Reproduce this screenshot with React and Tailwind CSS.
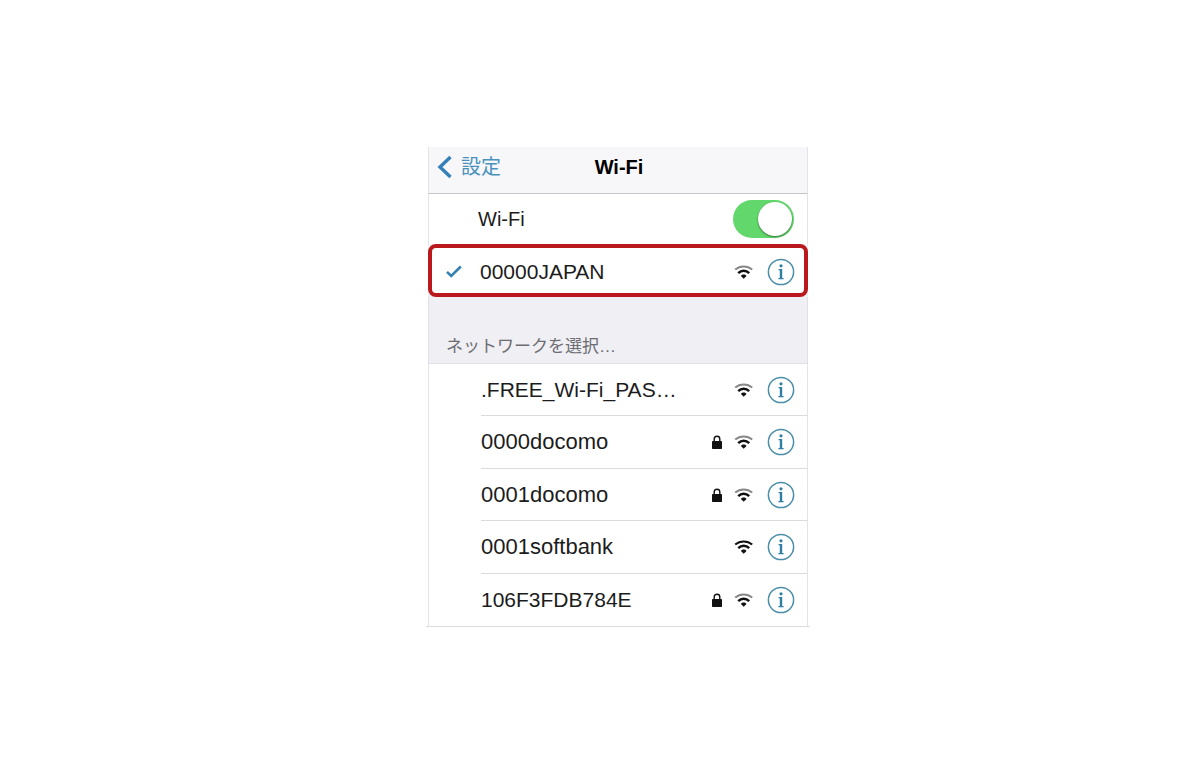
import { useState } from 'react';

const networks = [
  { name: '.FREE_Wi-Fi_PAS…', size: 'text-[21px]', locked: false, strong: false },
  { name: '0000docomo', size: 'text-[22px]', locked: true, strong: false },
  { name: '0001docomo', size: 'text-[22px]', locked: true, strong: false },
  { name: '0001softbank', size: 'text-[22px]', locked: false, strong: true },
  { name: '106F3FDB784E', size: 'text-[21px]', locked: true, strong: false },
];

function WifiIcon({ strong }) {
  return (
    <svg width="20" height="14" viewBox="0 0 20 14" fill="none" aria-hidden="true">
      <path d="M1.2 4.6C6 .4 13.4 .4 18.2 4.6" stroke={strong ? '#111' : '#888'} strokeWidth="2" />
      <path d="M4.2 8.2c3.2-3.2 7.8-3.2 11 0" stroke="#111" strokeWidth="2.4" />
      <path d="M9.7 13.8 6.9 11c1.4-1.9 4.2-1.9 5.6 0z" fill="#111" />
    </svg>
  );
}

function LockIcon() {
  return (
    <svg width="10" height="14" viewBox="0 0 10 14" aria-hidden="true">
      <path d="M2.2 7V4a2.8 2.8 0 0 1 5.6 0v3" fill="none" stroke="#111" strokeWidth="1.4" />
      <rect y="6" width="10" height="8" rx=".7" fill="#111" />
    </svg>
  );
}

function InfoButton({ name }) {
  return (
    <button type="button" aria-label={`${name} info`} className="shrink-0">
      <svg width="28" height="28" viewBox="0 0 28 28" fill="none" aria-hidden="true">
        <circle cx="14" cy="14" r="12.6" stroke="#4a8ea8" strokeWidth="1.5" />
        <circle cx="14" cy="7.8" r="1.6" fill="#2f7fa3" />
        <path d="M11.6 11.6H14M11.4 20.6h5.2" stroke="#2f7fa3" strokeWidth="1.2" />
        <path d="M14 11v9.8" stroke="#2f7fa3" strokeWidth="2.4" />
      </svg>
    </button>
  );
}

function Signal({ name, locked, strong }) {
  return (
    <div className="ml-auto flex items-center">
      {locked && <LockIcon />}
      <span className="ml-3 mr-[13px]">
        <WifiIcon strong={strong} />
      </span>
      <InfoButton name={name} />
    </div>
  );
}

export default function App() {
  const [enabled, setEnabled] = useState(true);

  return (
    <div className="min-h-screen bg-white pt-[147px] pl-9 font-['Liberation_Sans','Noto_Sans_CJK_JP',sans-serif] text-[#1c1c1c]">
      <main className="mx-auto max-w-96 border-b border-[#dcdcde]">
        <div className="mx-0.5">
          <header className="grid h-[47px] grid-cols-3 items-center border-x border-b border-x-[#e4e4e8] border-b-[#c4c4c8] bg-[#f7f7f9] pb-1.5">
            <a href="#settings" className="flex items-center gap-2 pl-2 text-xl leading-6 text-[#4a92bd]">
              <svg width="16" height="24" viewBox="0 0 16 24" fill="none" aria-hidden="true">
                <path d="M13.5 2 3 12l10.5 10" stroke="#3580b8" strokeWidth="3.4" />
              </svg>
              設定
            </a>
            <h1 className="pl-0.5 text-center text-xl leading-6 font-bold text-black">Wi-Fi</h1>
          </header>

          <div className="flex h-[50px] items-center border-x border-[#e4e4e8] pr-[13px] pl-[49px]">
            <label htmlFor="wifi" className="text-xl leading-6">Wi-Fi</label>
            <input
              id="wifi"
              type="checkbox"
              role="switch"
              checked={enabled}
              onChange={(e) => setEnabled(e.target.checked)}
              className="ml-auto flex h-[38px] w-[61px] appearance-none items-center rounded-full bg-gray-300 px-0.5 before:size-[34px] before:rounded-full before:bg-white before:shadow-[0_1px_2px_rgba(0,0,0,0.45)] checked:justify-end checked:bg-[#62d76b]"
            />
          </div>

          <div className="bg-[#efeff4]">
            <div className="flex h-[53px] items-center rounded-lg border-4 border-[#b9191d] bg-white pt-0.5 pr-[9px] pl-3.5">
              <svg width="16" height="13" viewBox="0 0 16 13" fill="none" aria-hidden="true">
                <path d="m1 6.8 4.2 4.2L14.8 1.5" stroke="#3580b0" strokeWidth="2.6" />
              </svg>
              <span className="ml-[18px] text-[21px] leading-6">00000JAPAN</span>
              <Signal name="00000JAPAN" locked={false} strong={false} />
            </div>
          </div>

          <h2 className="border border-t-0 border-[#e0e0e5] bg-[#efeff4] pt-[38px] pb-1 pl-[17px] text-[17px] leading-6 text-[#6d6d72]">
            ネットワークを選択…
          </h2>

          <ul className="border-x border-[#e4e4e8] pl-[52px]">
            {networks.map((n) => (
              <li key={n.name} className="flex items-center border-b border-[#dcdcde] pr-3 odd:h-[52px] even:h-[53px] last:border-b-0">
                <span className={`${n.size} leading-6`}>{n.name}</span>
                <Signal name={n.name} locked={n.locked} strong={n.strong} />
              </li>
            ))}
          </ul>
        </div>
      </main>
    </div>
  );
}
